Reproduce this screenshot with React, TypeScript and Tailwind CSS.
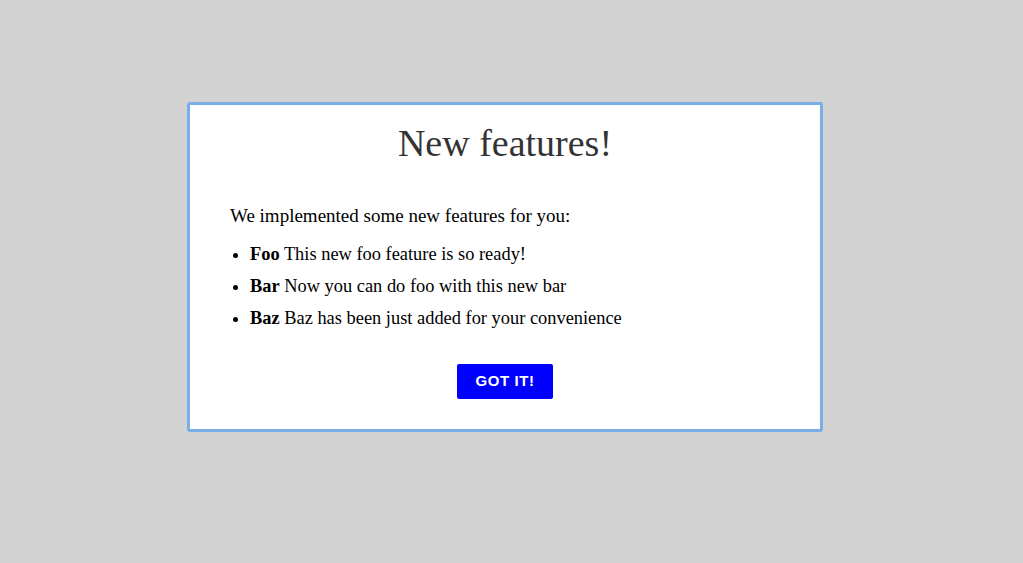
import React from 'react';

const features = [
  { name: 'Foo', text: 'This new foo feature is so ready!' },
  { name: 'Bar', text: 'Now you can do foo with this new bar' },
  { name: 'Baz', text: 'Baz has been just added for your convenience' },
];

export default function App() {
  return (
    <div className="min-h-[563px] w-full bg-[#d3d3d3] pt-[102px] pl-[187px] font-['Liberation_Serif',serif]">
      <div className="w-[636px] h-[330px] rounded-[3px] border-[3px] border-[#7aaee8] bg-white pt-[17px] pb-[30px] px-[40px]">
        <h1 className="text-center text-[38px] leading-[43px] text-[#333333]">New features!</h1>
        <p className="mt-[35px] text-[19px] leading-[32px] text-black">
          We implemented some new features for you:
        </p>
        <ul className="mt-[6px] list-disc pl-[20px] text-[18.4px] leading-[32px] text-black">
          {features.map((f) => (
            <li key={f.name}>
              <b>{f.name}</b> {f.text}
            </li>
          ))}
        </ul>
        <div className="mt-[30px] flex justify-center">
          <button className="h-[35px] w-[96px] rounded-[2px] bg-[#0000ff] font-['Liberation_Sans',sans-serif] text-[15px] font-bold tracking-[0.6px] text-white">
            GOT IT!
          </button>
        </div>
      </div>
    </div>
  );
}
